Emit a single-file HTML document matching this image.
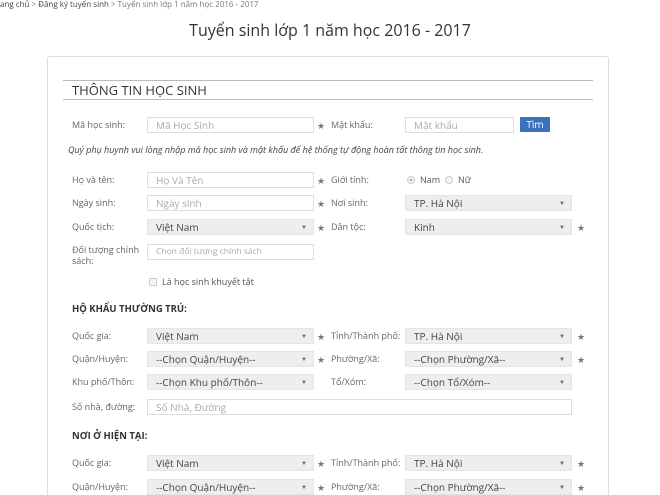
<!DOCTYPE html>
<html style="height:495px;overflow:hidden"><head><meta charset="utf-8"><style>
body{margin:0;width:660px;height:495px;overflow:hidden;background:#fff;font-family:"Open Sans","Liberation Sans","DejaVu Sans",sans-serif;position:relative}
div{position:absolute;box-sizing:border-box;white-space:nowrap}
.l{font-size:9px;color:#666;line-height:12px}
.i,.s{height:16px;font-size:10px;line-height:14px;padding-left:8px}
.i{background:#fff;border:1px solid #ddd;color:#aaa}
.s{background:#eee;border:1px solid #e4e4e4;color:#444}
.s:after{content:"▼";position:absolute;right:6px;top:0;font-size:6px;color:#666}
.st{font-size:9px;color:#777;line-height:12px}
.h{font-size:9.5px;font-weight:bold;color:#333}
</style></head><body>
<div style="left:0;top:0;font-size:8px;color:#777;line-height:10px"><span style="color:#444">ang chủ</span> &gt; <span style="color:#444">Đăng ký tuyển sinh</span> &gt; Tuyển sinh lớp 1 năm học 2016 - 2017</div>
<div style="left:0;width:660px;top:20px;text-align:center;font-size:16px;color:#333;line-height:20px">Tuyển sinh lớp 1 năm học 2016 - 2017</div>
<div style="left:47px;top:56px;width:562px;height:439px;border:1px solid #ddd;border-bottom:none;border-radius:3px 3px 0 0"></div>
<div style="left:63px;top:80px;width:530px;height:20px;border-top:1px solid #bbb;border-bottom:1px solid #bbb;"></div>
<div style="left:72px;top:83px;font-size:13px;color:#333;line-height:14px">THÔNG TIN HỌC SINH</div>

<div class="l" style="left:72px;top:119px">Mã học sinh:</div>
<div class="i" style="left:147px;top:117px;width:167px">Mã Học Sinh</div>
<div class="st" style="left:317px;top:120px">★</div>
<div class="l" style="left:331px;top:119px">Mật khẩu:</div>
<div class="i" style="left:405px;top:117px;width:109px">Mật khẩu</div>
<div style="left:520px;top:117px;width:30px;height:15px;background:#3b72b9;color:#fff;font-size:10px;line-height:15px;text-align:center;border-radius:1px">Tìm</div>

<div style="left:68px;top:144px;font-size:9px;font-style:italic;color:#444;line-height:12px">Quý phụ huynh vui lòng nhập mã học sinh và mật khẩu để hệ thống tự động hoàn tất thông tin học sinh.</div>

<div class="l" style="left:72px;top:174px">Họ và tên:</div>
<div class="i" style="left:147px;top:172px;width:167px">Họ Và Tên</div>
<div class="st" style="left:317px;top:175px">★</div>
<div class="l" style="left:331px;top:174px">Giới tính:</div>
<div style="left:407px;top:176px;width:8px;height:8px;border:1px solid #ccc;border-radius:50%;background:#f4f4f4"><div style="left:2px;top:2px;width:2px;height:2px;background:#888;border-radius:50%"></div></div>
<div class="l" style="left:420px;top:174px;color:#555">Nam</div>
<div style="left:445px;top:176px;width:8px;height:8px;border:1px solid #ccc;border-radius:50%;background:#f4f4f4"></div>
<div class="l" style="left:458px;top:174px;color:#555">Nữ</div>

<div class="l" style="left:72px;top:197px">Ngày sinh:</div>
<div class="i" style="left:147px;top:195px;width:167px">Ngày sinh</div>
<div class="st" style="left:317px;top:198px">★</div>
<div class="l" style="left:331px;top:197px">Nơi sinh:</div>
<div class="s" style="left:405px;top:195px;width:167px">TP. Hà Nội</div>

<div class="l" style="left:72px;top:221px">Quốc tịch:</div>
<div class="s" style="left:147px;top:219px;width:167px">Việt Nam</div>
<div class="st" style="left:317px;top:222px">★</div>
<div class="l" style="left:331px;top:221px">Dân tộc:</div>
<div class="s" style="left:405px;top:219px;width:167px">Kinh</div>
<div class="st" style="left:577px;top:222px">★</div>

<div class="l" style="left:72px;top:244px;line-height:11px">Đối tượng chính<br>sách:</div>
<div class="i" style="left:147px;top:244px;width:167px;font-size:8.5px">Chọn đối tượng chính sách</div>

<div style="left:149px;top:278px;width:8px;height:8px;border:1px solid #ccc;background:#f4f4f4;border-radius:1px"></div>
<div class="l" style="left:162px;top:276px;color:#555">Là học sinh khuyết tật</div>

<div class="h" style="left:72px;top:302px">HỘ KHẨU THƯỜNG TRÚ:</div>

<div class="l" style="left:72px;top:330px">Quốc gia:</div>
<div class="s" style="left:147px;top:328px;width:167px">Việt Nam</div>
<div class="st" style="left:317px;top:331px">★</div>
<div class="l" style="left:331px;top:330px">Tỉnh/Thành phố:</div>
<div class="s" style="left:405px;top:328px;width:167px">TP. Hà Nội</div>
<div class="st" style="left:577px;top:331px">★</div>

<div class="l" style="left:72px;top:353px">Quận/Huyện:</div>
<div class="s" style="left:147px;top:351px;width:167px">--Chọn Quận/Huyện--</div>
<div class="st" style="left:317px;top:354px">★</div>
<div class="l" style="left:331px;top:353px">Phường/Xã:</div>
<div class="s" style="left:405px;top:351px;width:167px">--Chọn Phường/Xã--</div>
<div class="st" style="left:577px;top:354px">★</div>

<div class="l" style="left:72px;top:376px">Khu phố/Thôn:</div>
<div class="s" style="left:147px;top:374px;width:167px">--Chọn Khu phố/Thôn--</div>
<div class="l" style="left:331px;top:376px">Tổ/Xóm:</div>
<div class="s" style="left:405px;top:374px;width:167px">--Chọn Tổ/Xóm--</div>

<div class="l" style="left:72px;top:401px">Số nhà, đường:</div>
<div class="i" style="left:147px;top:399px;width:425px">Số Nhà, Đường</div>

<div class="h" style="left:72px;top:429px">NƠI Ở HIỆN TẠI:</div>

<div class="l" style="left:72px;top:457px">Quốc gia:</div>
<div class="s" style="left:147px;top:455px;width:167px">Việt Nam</div>
<div class="st" style="left:317px;top:458px">★</div>
<div class="l" style="left:331px;top:457px">Tỉnh/Thành phố:</div>
<div class="s" style="left:405px;top:455px;width:167px">TP. Hà Nội</div>
<div class="st" style="left:577px;top:458px">★</div>

<div class="l" style="left:72px;top:481px">Quận/Huyện:</div>
<div class="s" style="left:147px;top:479px;width:167px">--Chọn Quận/Huyện--</div>
<div class="st" style="left:317px;top:482px">★</div>
<div class="l" style="left:331px;top:481px">Phường/Xã:</div>
<div class="s" style="left:405px;top:479px;width:167px">--Chọn Phường/Xã--</div>
<div class="st" style="left:577px;top:482px">★</div>
</body></html>
